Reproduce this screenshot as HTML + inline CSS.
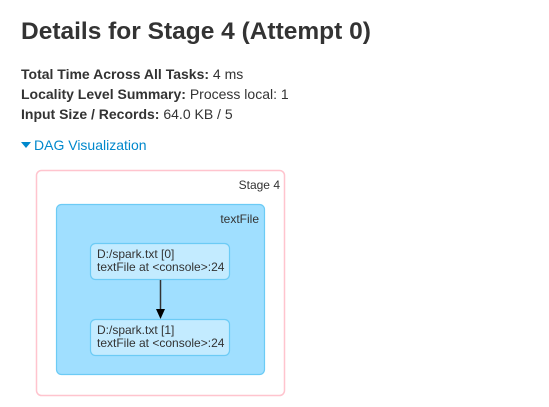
<!DOCTYPE html>
<html><head><meta charset="utf-8"><style>
body{margin:0;background:#fff;font-family:"Liberation Sans",Arial,sans-serif;color:#333;width:549px;height:407px;overflow:hidden;position:relative}
h3{position:absolute;left:21px;top:17px;margin:0;font-size:24.5px;font-weight:bold;line-height:30px;color:#333}
.info{position:absolute;left:21px;top:64px;font-size:14px;line-height:20px}
.info b{font-weight:bold}
.dag{position:absolute;left:34px;top:135px;font-size:14px;line-height:20px;color:#0088cc}
svg{position:absolute;left:0;top:0}
</style></head><body>
<h3>Details for Stage 4 (Attempt 0)</h3>
<div class="info"><b>Total Time Across All Tasks:</b> 4 ms<br><b>Locality Level Summary:</b> Process local: 1<br><b>Input Size / Records:</b> 64.0 KB / 5</div>
<div class="dag">DAG Visualization</div>
<svg width="549" height="407" font-family="Liberation Sans, Arial, sans-serif">
<path d="M21 142 L31 142 L26 148 Z" fill="#0088cc"/>
<rect x="36.5" y="170.5" width="248" height="225" rx="5" fill="#fff" stroke="#FFC4CE" stroke-width="1.5"/>
<text x="280" y="189" font-size="12" text-anchor="end" fill="#333">Stage 4</text>
<rect x="56.5" y="204.5" width="208" height="170" rx="5" fill="#A0DFFF" stroke="#6CCBF5" stroke-width="1.2"/>
<text x="259" y="223" font-size="12" text-anchor="end" fill="#333">textFile</text>
<rect x="90.5" y="243.5" width="139" height="36" rx="5" fill="#C3EBFF" stroke="#6CCBF5" stroke-width="1.2"/>
<text x="97" y="258" font-size="12" fill="#333">D:/spark.txt [0]</text>
<text x="97" y="271" font-size="12" fill="#333">textFile at &lt;console&gt;:24</text>
<rect x="90.5" y="319.5" width="139" height="36" rx="5" fill="#C3EBFF" stroke="#6CCBF5" stroke-width="1.2"/>
<text x="97" y="334" font-size="12" fill="#333">D:/spark.txt [1]</text>
<text x="97" y="347" font-size="12" fill="#333">textFile at &lt;console&gt;:24</text>
<line x1="160.5" y1="280" x2="160.5" y2="310" stroke="#333" stroke-width="1.5"/>
<path d="M156 309 L165 309 L160.5 319 Z" fill="#000"/>
</svg>
</body></html>
